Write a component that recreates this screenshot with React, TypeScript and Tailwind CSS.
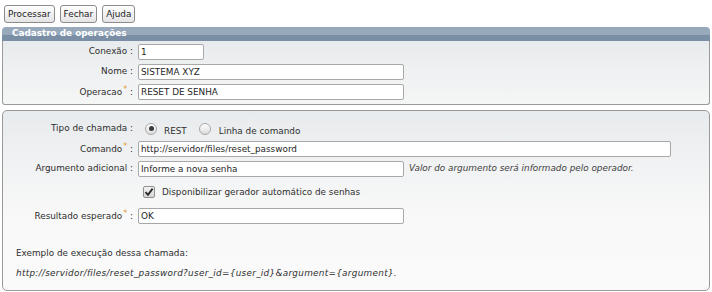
import React from "react";

const Ast = () => (
  <span className="align-[3px] text-[8px] text-[#e39b3d] ml-[1px]">*</span>
);

const Input = ({ value, w }: { value: string; w: string }) => (
  <div
    className={`${w} h-[16px] border border-[#a8a8a8] rounded-[2px] bg-white pl-[2px] text-[#1e1e1e] leading-[14px] whitespace-nowrap overflow-hidden`}
  >
    {value}
  </div>
);

const Label = ({ text, req }: { text: string; req?: boolean }) => (
  <div className="w-[131px] shrink-0 text-right text-[#2e2e2e] whitespace-nowrap pr-[1px]">
    {text}
    {req && <Ast />} :
  </div>
);

const Row = ({ children, h = "h-[20px]" }: { children: React.ReactNode; h?: string }) => (
  <div className={`flex items-center ${h}`}>{children}</div>
);

const Radio = ({ checked }: { checked?: boolean }) => (
  <span className="w-[12px] h-[12px] rounded-full border border-[#a8a8a8] bg-[linear-gradient(#ffffff,#dcdcdc)] flex items-center justify-center shrink-0">
    {checked && <span className="w-[5px] h-[5px] rounded-full bg-[#3a3a3a]" />}
  </span>
);

const Btn = ({ children }: { children: React.ReactNode }) => (
  <button className="h-[18px] px-[3px] border border-[#8c8c8c] rounded-[3px] bg-[linear-gradient(#ffffff,#e4e4e4)] text-[#222] leading-[16px]">
    {children}
  </button>
);

export default function App() {
  return (
    <div className="w-[712px] h-[292px] bg-white font-['DejaVu_Sans',sans-serif] text-[8.85px] text-[#2e2e2e] pt-[5px] overflow-hidden">
      <div className="flex gap-[5px] pl-[4px]">
        <Btn>Processar</Btn>
        <Btn>Fechar</Btn>
        <Btn>Ajuda</Btn>
      </div>

      {/* Panel 1 */}
      <div className="mx-[2px] mt-[4px]">
        <div className="h-[14px] rounded-t-[4px] bg-[linear-gradient(#97a9bb_0,#97a9bb_55%,#7a8fa6_55%,#7a8fa6_100%)] pl-[10px] text-white font-bold leading-[13px]">
          Cadastro de operações
        </div>
        <div className="border border-t-0 border-[#9a9a9a] rounded-b-[3px] bg-[linear-gradient(#e8ebed,#f5f6f6)] pt-[1px] pb-[2px]">
          <Row>
            <Label text="Conexão" />
            <div className="ml-[4px]">
              <Input value="1" w="w-[66px]" />
            </div>
          </Row>
          <Row>
            <Label text="Nome" />
            <div className="ml-[4px]">
              <Input value="SISTEMA XYZ" w="w-[266px]" />
            </div>
          </Row>
          <Row>
            <Label text="Operacao" req />
            <div className="ml-[4px]">
              <Input value="RESET DE SENHA" w="w-[266px]" />
            </div>
          </Row>
        </div>
      </div>

      {/* Panel 2 */}
      <div className="mx-[2px] mt-[5px] border border-[#9a9a9a] rounded-[5px] bg-[linear-gradient(#e8ebed,#f9f9f9_60%,#fafafa)] pt-[8px] pb-[6px]">
        <Row>
          <Label text="Tipo de chamada" />
          <div className="ml-[11px] flex items-center">
            <Radio checked />
            <span className="ml-[7px] mt-[6px]">REST</span>
            <span className="ml-[12px]">
              <Radio />
            </span>
            <span className="ml-[8px] mt-[6px]">Linha de comando</span>
          </div>
        </Row>
        <Row>
          <Label text="Comando" req />
          <div className="ml-[4px]">
            <Input value="http://servidor/files/reset_password" w="w-[533px]" />
          </div>
        </Row>
        <Row>
          <Label text="Argumento adicional" />
          <div className="ml-[4px] flex items-center">
            <Input value="Informe a nova senha" w="w-[266px]" />
            <span className="ml-[5px] italic text-[#404040]">
              Valor do argumento será informado pelo operador.
            </span>
          </div>
        </Row>
        <Row h="h-[27px]">
          <div className="w-[131px] shrink-0" />
          <div className="ml-[9px] flex items-center">
            <span className="w-[12px] h-[12px] border border-[#8f8f8f] rounded-[2px] bg-[linear-gradient(#f4f4f4,#d6d6d6)] flex items-center justify-center">
              <svg width="10" height="10" viewBox="0 0 10 10">
                <path d="M1.5 5.2 L4 7.8 L8.6 1.6" fill="none" stroke="#2b2b2b" strokeWidth="1.9" />
              </svg>
            </span>
            <span className="ml-[7px]">Disponibilizar gerador automático de senhas</span>
          </div>
        </Row>
        <Row>
          <Label text="Resultado esperado" req />
          <div className="ml-[4px]">
            <Input value="OK" w="w-[266px]" />
          </div>
        </Row>
        <div className="h-[18px]" />
        <div className="h-[20px] flex items-center pl-[13px]">
          Exemplo de execução dessa chamada:
        </div>
        <div className="h-[20px] flex items-center pl-[13px] italic tracking-[0.3px]">
          http://servidor/files/reset_password?user_id={"{user_id}"}&amp;argument={"{argument}"}.
        </div>
      </div>
    </div>
  );
}
